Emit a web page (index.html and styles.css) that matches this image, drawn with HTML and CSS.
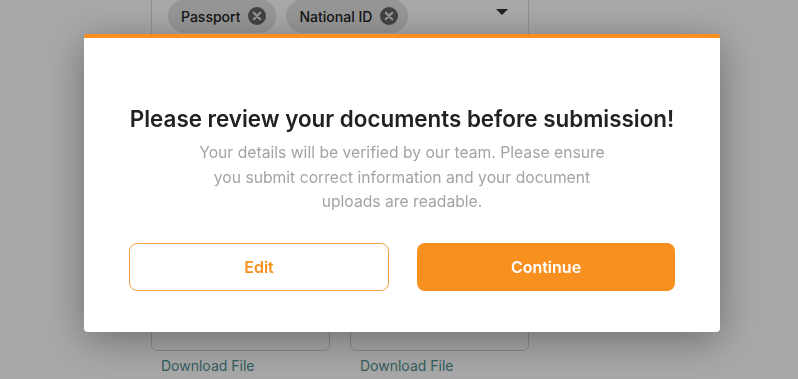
FILE: index.html
```html
<!DOCTYPE html>
<html lang="en">
  <head>
    <meta charset="UTF-8" />
    <meta name="viewport" content="width=device-width, initial-scale=1.0" />
    <title>Document Review</title>
    <link rel="stylesheet" href="styles.css">
  </head>
  <body>
    <div class="page">
      <div class="doc-select">
        <div class="chips">
          <span class="chip">Passport
            <svg class="chip-x" viewBox="0 0 18 18" width="18" height="18"><circle cx="9" cy="9" r="9" fill="#666"/><path d="M5.8 5.8l6.4 6.4M12.2 5.8l-6.4 6.4" stroke="#e6e6e6" stroke-width="2.2" stroke-linecap="round"/></svg>
          </span>
          <span class="chip">National ID
            <svg class="chip-x" viewBox="0 0 18 18" width="18" height="18"><circle cx="9" cy="9" r="9" fill="#666"/><path d="M5.8 5.8l6.4 6.4M12.2 5.8l-6.4 6.4" stroke="#e6e6e6" stroke-width="2.2" stroke-linecap="round"/></svg>
          </span>
        </div>
        <span class="caret"></span>
      </div>

      <div class="uploads">
        <div class="upload">
          <div class="upload-box"></div>
          <a href="#" class="download">Download File</a>
        </div>
        <div class="upload">
          <div class="upload-box"></div>
          <a href="#" class="download">Download File</a>
        </div>
      </div>
    </div>

    <div class="overlay"></div>

    <div class="modal">
      <h2>Please review your documents before submission!</h2>
      <p>Your details will be verified by our team. Please ensure you submit correct information and your document uploads are readable.</p>
      <div class="actions">
        <button class="btn btn-outline">Edit</button>
        <button class="btn btn-primary">Continue</button>
      </div>
    </div>
  </body>
</html>
```

FILE: styles.css
```css
body {
  margin: 0;
  font-family: "Inter", "Liberation Sans", sans-serif;
  background: #ffffff;
  color: #222;
  overflow: hidden;
  height: 379px;
}

.page {
  padding-left: 151px;
  width: 378px;
}

.doc-select {
  margin-top: -20px;
  height: 280px;
  border: 1px solid #dcdcdc;
  border-top: none;
  border-radius: 0 0 6px 6px;
  display: flex;
  justify-content: space-between;
  align-items: flex-start;
  padding: 20px 20px 0 16px;
  box-sizing: border-box;
}

.chips {
  display: flex;
  gap: 10px;
}

.chip {
  display: flex;
  align-items: center;
  gap: 8px;
  height: 34px;
  padding: 0 10px 0 13px;
  margin-top: -1px;
  border-radius: 17px;
  background: #e4e4e4;
  font-size: 14px;
  font-weight: 500;
  color: #222;
}

.caret {
  width: 0;
  height: 0;
  border-left: 6px solid transparent;
  border-right: 6px solid transparent;
  border-top: 6px solid #333;
  margin-top: 9px;
}

.uploads {
  display: flex;
  gap: 20px;
  margin-top: 20px;
}

.upload {
  width: 179px;
}

.upload-box {
  height: 71px;
  border: 1px solid #cfcfcf;
  border-radius: 6px;
  box-sizing: border-box;
}

.download {
  display: block;
  margin: 6px 0 0 10px;
  font-size: 14px;
  line-height: 17px;
  color: #4f8f8f;
  text-decoration: none;
}

.overlay {
  position: fixed;
  inset: 0;
  background: rgba(0, 0, 0, 0.34);
}

.modal {
  position: fixed;
  left: 84px;
  top: 34px;
  width: 636px;
  height: 298px;
  box-sizing: border-box;
  background: #fff;
  border-top: 4px solid #f7901e;
  border-radius: 3px 3px 4px 4px;
  box-shadow: 0 8px 40px rgba(0, 0, 0, 0.35);
  padding: 66px 45px 0;
  text-align: center;
}

.modal h2 {
  margin: 0 -10px;
  white-space: nowrap;
  font-size: 22.4px;
  line-height: 30px;
  font-weight: 600;
  color: #222;
}

.modal p {
  margin: 7px auto 0;
  max-width: 420px;
  font-size: 15.7px;
  line-height: 24.5px;
  color: #a3a3a3;
}

.actions {
  display: flex;
  gap: 28px;
  margin-top: 28px;
}

.btn {
  flex: 1;
  height: 48px;
  border-radius: 8px;
  font-family: inherit;
  font-size: 16px;
  font-weight: 600;
  cursor: pointer;
}

.btn-outline {
  background: #fff;
  border: 1px solid #f0a04a;
  color: #f7901e;
}

.btn-primary {
  background: #f7901e;
  border: none;
  color: #fff;
}
```
